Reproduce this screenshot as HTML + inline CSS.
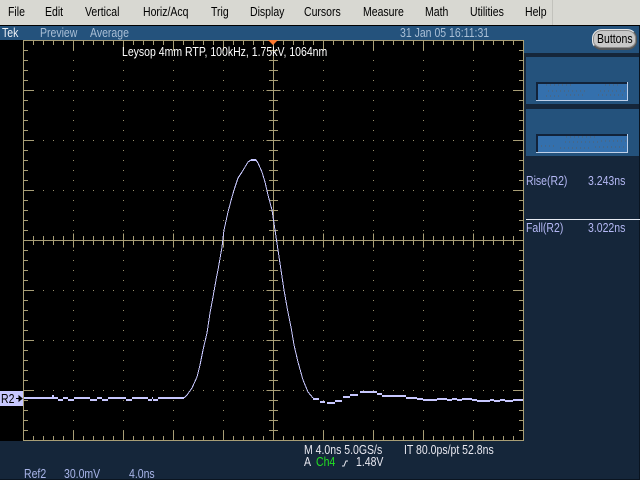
<!DOCTYPE html>
<html><head><meta charset="utf-8"><style>
html,body{margin:0;padding:0;background:#000}
#p{position:relative;width:640px;height:480px;overflow:hidden;background:#000;font-family:"Liberation Sans",sans-serif;font-size:12.5px;line-height:12px}
#p div{position:absolute}
.t{white-space:nowrap;transform:scaleX(.84);transform-origin:0 0}
.m{color:#000;top:6px}
.hd{color:#a9bfd6;top:27px}
.lv{color:#b4b8f4}
.b{color:#a8b4e8}
.w{color:#e8e8f0}
.f{left:536px;width:92px;height:19px;box-sizing:border-box;background:#3470ad;border:2px solid #c0d0e8;border-width:0 1px 1px 0;box-shadow:inset 2px 2px 0 #12233a}
</style></head><body><div id="p">
<div style="left:0;top:0;width:640px;height:25px;background:#d8d8d2"></div>
<div style="left:552px;top:0;width:1px;height:25px;background:#c2c2bc"></div>
<div style="left:0;top:25px;width:640px;height:1px;background:#000"></div>
<div class="t m" style="left:8px">File</div>
<div class="t m" style="left:45px">Edit</div>
<div class="t m" style="left:84.5px">Vertical</div>
<div class="t m" style="left:143px">Horiz/Acq</div>
<div class="t m" style="left:210.5px">Trig</div>
<div class="t m" style="left:249.5px">Display</div>
<div class="t m" style="left:304px">Cursors</div>
<div class="t m" style="left:362.5px">Measure</div>
<div class="t m" style="left:424.5px">Math</div>
<div class="t m" style="left:469.5px">Utilities</div>
<div class="t m" style="left:524.5px">Help</div>

<div style="left:0;top:26px;width:640px;height:14px;background:#24527c"></div>
<div style="left:524px;top:26px;width:116px;height:27px;background:#24527c"></div>
<div style="left:524px;top:53px;width:116px;height:427px;background:#15263a"></div>
<div style="left:526px;top:57px;width:114px;height:47px;background:#24527c"></div>
<div style="left:526px;top:109px;width:114px;height:47px;background:#24527c"></div>
<div style="left:0;top:441px;width:524px;height:39px;background:#15263a"></div>
<div style="left:639px;top:26px;width:1px;height:454px;background:#0a1420"></div>
<div style="left:0;top:479px;width:640px;height:1px;background:#0a1420"></div>

<div class="t" style="left:2px;top:27px;color:#eef2f8">Tek</div>
<div class="t hd" style="left:40px">Preview</div>
<div class="t hd" style="left:90px">Average</div>
<div class="t hd" style="left:400px">31 Jan 05 16:11:31</div>

<div style="left:592px;top:29px;width:43px;height:18px;background:#c8c8c8;border:1px solid #e8e8e8;border-bottom:2px solid #555;border-right:1px solid #555;border-radius:10px/9px;box-shadow:inset 0 0 0 1px #8a8a8a"></div>
<div class="t" style="left:597px;top:33px;color:#000">Buttons</div>

<div class="f" style="top:82px"></div>
<div class="f" style="top:134px"></div>
<svg style="position:absolute;left:0;top:0" width="640" height="480" viewBox="0 0 640 480">
<g shape-rendering="crispEdges" fill="none">
<g stroke="#55606c" stroke-width="1" stroke-dasharray="1 3">
<path d="M546 85H572M605 85H620M548 91H586M600 91H625M546 96H560M566 95H586M598 95H624"/>
<path d="M566 137H596M565 142H600M601 141H627M541 146H556M560 148H590M595 147H626"/>
</g>
<rect x="23.5" y="40.5" width="500" height="400" stroke="#a89e76"/>
<g stroke="#a89e76">
<path stroke-width="4" stroke-dasharray="1 9" d="M33 43H523M33 438H523"/>
<path stroke-width="4" stroke-dasharray="1 9" d="M26 50V440M521 50V440"/>
<path stroke-width="9" stroke-dasharray="1 49" d="M73 45.5H523M73 435.5H523"/>
<path stroke-width="10" stroke-dasharray="1 49" d="M29 90V440M518 90V440"/>
<path d="M273.5 40V440"/>
<path d="M23 240.5H523"/>
<path stroke-width="9" stroke-dasharray="1 9" d="M273.5 50V440"/>
<path stroke-width="9" stroke-dasharray="1 9" d="M33 240.5H523"/>
<path stroke-width="14" stroke-dasharray="1 49" d="M273.5 90V440"/>
<path stroke-width="14" stroke-dasharray="1 49" d="M73 240.5H523"/>
</g>
<g stroke="#a89e76" stroke-width="1" stroke-dasharray="1 9" opacity=".9">
<path d="M33 90.5H523M33 140.5H523M33 190.5H523M33 290.5H523M33 340.5H523M33 390.5H523"/>
<path d="M73.5 50V440M123.5 50V440M173.5 50V440M223.5 50V440M323.5 50V440M373.5 50V440M423.5 50V440M473.5 50V440"/>
</g>
<!-- flat trace, stepped pixels -->
<g stroke="#c8c8ff" stroke-width="2">
<path d="M24 398H58M63 398H68M74 398H90M97 398H102M108 398H126M132 398H148M152 398H153M158 398H184"/>
<path d="M58 400H63M68 400H74M90 400H97M102 400H108M126 400H132M148 400H152M153 400H158"/>
<path d="M52 396H54"/>
<path d="M251 160H256"/>
<path d="M313 399H319M320 402H325M327 403H335M335 401H342M343 397H350M350 395H358M360 392H377M377 394H382M382 396H406M406 398H417M417 399H423M423 400H437M437 399H447M447 400H452M452 399H457M457 400H462M462 399H472M472 400H477M477 401H490M490 400H494M494 401H500M500 400H505M505 401H513M513 400H523"/>
</g>
</g>
<polygon points="268,40 278,40 273,45" fill="#ff7a30"/>
<polyline shape-rendering="crispEdges" fill="none" stroke="#c8c8ff" stroke-width="1" points="184,398 187,395 192,388 197,377 200,365 203,350 207,333 210,313 213,297 216,280 218,270 222,247 224,230 228,212 232,197 235,187 238,178 242,172 248,162 251,160 256,160 258,163 262,172 265,182 268,195 272,210 275,230 278,250 281,270 284,290 287,307 291,327 294,345 298,362 303,380 308,392 313,398"/>
<path d="M526 219.5H640" stroke="#e8ecf4" stroke-width="1" shape-rendering="crispEdges"/>
</svg>

<div class="t" style="left:122px;top:46px;color:#fff">Leysop 4mm RTP, 100kHz, 1.75kV, 1064nm</div>

<div style="left:0;top:391px;width:23px;height:15px;background:#c8c8ff"></div>
<div class="t" style="left:1px;top:393px;color:#000">R2</div>
<svg style="position:absolute;left:15px;top:394px" width="9" height="9"><path d="M1 4.5H6M4 2L7 4.5L4 7Z" stroke="#000" fill="#000" stroke-width="1"/></svg>

<div class="t lv" style="left:525.5px;top:175px">Rise(R2)</div>
<div class="t lv" style="left:588px;top:175px">3.243ns</div>
<div class="t lv" style="left:525.5px;top:222px">Fall(R2)</div>
<div class="t lv" style="left:588px;top:222px">3.022ns</div>

<div class="t w" style="left:304px;top:444px">M 4.0ns 5.0GS/s</div>
<div class="t w" style="left:404px;top:444px">IT 80.0ps/pt 52.8ns</div>
<div class="t w" style="left:304px;top:456px">A</div>
<div class="t" style="left:316px;top:456px;color:#22e022">Ch4</div>
<svg style="position:absolute;left:341px;top:459px" width="8" height="8"><path d="M1 7H3L5 2H7" stroke="#e8e8f0" fill="none"/></svg>
<div class="t w" style="left:356px;top:456px">1.48V</div>

<div class="t b" style="left:24px;top:468px">Ref2</div>
<div class="t b" style="left:64px;top:468px">30.0mV</div>
<div class="t b" style="left:129px;top:468px">4.0ns</div>
</div></body></html>
